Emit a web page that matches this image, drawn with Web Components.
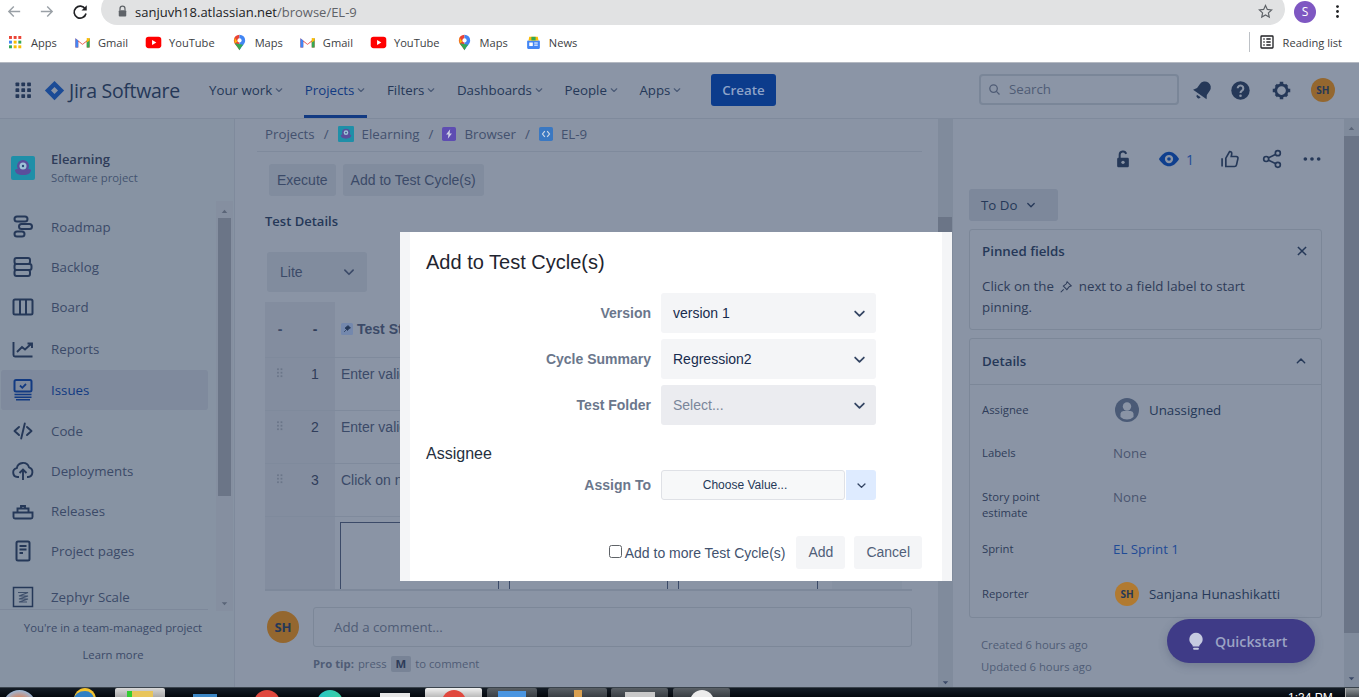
<!DOCTYPE html>
<html>
<head>
<meta charset="utf-8">
<title>EL-9</title>
<style>
  html, body { margin: 0; height: 697px; overflow: hidden; background: #8a94a5; }
  body { position: relative; display: flex; flex-direction: column; font-family: "Open Sans", sans-serif; }
  .workspace { display: flex; height: 569px; overflow: hidden; }
</style>
</head>
<body>
  <chrome-bar></chrome-bar>
  <jira-nav></jira-nav>
  <div class="workspace">
    <side-nav></side-nav>
    <issue-main></issue-main>
    <issue-panel></issue-panel>
  </div>
  <task-bar></task-bar>
  <test-dialog></test-dialog>
  <quick-start></quick-start>

<script>
const ICONS = {
  back: `<path d="M20 12H5M11 5l-7 7 7 7" fill="none" stroke="currentColor" stroke-width="2"/>`,
  forward: `<path d="M4 12h15M13 5l7 7-7 7" fill="none" stroke="currentColor" stroke-width="2"/>`,
  reload: `<path d="M19 8a8 8 0 1 0 1 6" fill="none" stroke="currentColor" stroke-width="2.2"/><path d="M21 3v7h-7z" fill="currentColor"/>`,
  lock: `<path d="M8 10V7.500a4 4 0 0 1 8 0V10" fill="none" stroke="currentColor" stroke-width="2"/><rect x="6" y="10" width="12" height="10" rx="1.500" fill="currentColor"/>`,
  star: `<path d="M12 3.500l2.600 5.600 6 .7-4.500 4.100 1.200 6-5.300-3-5.300 3 1.200-6-4.500-4.100 6-.7z" fill="none" stroke="currentColor" stroke-width="1.700"/>`,
  kebab: `<circle cx="12" cy="5" r="2" fill="currentColor"/><circle cx="12" cy="12" r="2" fill="currentColor"/><circle cx="12" cy="19" r="2" fill="currentColor"/>`,
  apps: [0, 1, 2].map(r => [0, 1, 2].map(c => `<rect x="${3 + c * 7}" y="${3 + r * 7}" width="4.400" height="4.400" fill="${[['#ea4335', '#ea4335', '#ea4335'], ['#4285f4', '#fbbc04', '#34a853'], ['#34a853', '#fbbc04', '#fbbc04']][r][c]}"/>`).join('')).join(''),
  gmail: `<path d="M2 6l10 8 10-8v13h-4V10.500l-6 4.500-6-4.500V19H2z" fill="#ea4335"/><path d="M2 6v13h4V9z" fill="#4285f4"/><path d="M22 6v13h-4V9z" fill="#34a853"/><path d="M18 5.500L22 6v3l-4 3z" fill="#fbbc04"/>`,
  youtube: `<rect x="1" y="4" width="22" height="16" rx="4" fill="#f00"/><path d="M10 8.500v7l6-3.500z" fill="#fff"/>`,
  maps: `<path d="M12 1a8 8 0 0 0-8 8c0 5 5 8 8 14z" fill="#ea4335"/><path d="M12 1a8 8 0 0 1 8 8c0 5-5 8-8 14z" fill="#4285f4"/><path d="M5 13c2 3 5 6 7 10 1-3 3-5 5-8z" fill="#34a853"/><path d="M5 5l4 6-4 2z" fill="#fbbc04"/><circle cx="12" cy="9" r="3" fill="#fff"/>`,
  news: `<rect x="3" y="9" width="18" height="12" rx="1.500" fill="#4285f4"/><path d="M5 9l1-5h12l1 5z" fill="#fbbc04"/><path d="M9 4h6v5H9z" fill="#34a853"/><rect x="6" y="12" width="5" height="5" fill="#fff"/><rect x="13" y="12" width="5" height="1.500" fill="#fff"/><rect x="13" y="15" width="5" height="1.500" fill="#fff"/>`,
  readinglist: `<rect x="3" y="3" width="18" height="18" rx="1" fill="none" stroke="currentColor" stroke-width="2"/><path d="M6.500 7.500h2M6.500 12h2M6.500 16.500h2M11 7.500h6.500M11 12h6.500M11 16.500h6.500" stroke="currentColor" stroke-width="2"/>`,
  grid: [0, 1, 2].map(r => [0, 1, 2].map(c => `<rect x="${3 + c * 7}" y="${3 + r * 7}" width="4.500" height="4.500" rx=".8" fill="currentColor"/>`).join('')).join(''),
  jira: `<path d="M12 1L23 12 12 23 1 12z" fill="currentColor"/><path d="M12 8l4 4-4 4-4-4z" fill="#8a94a5"/>`,
  chevron: `<path d="M6.500 9.500l5.500 5.500 5.500-5.500" fill="none" stroke="currentColor" stroke-width="2.200" stroke-linecap="round" stroke-linejoin="round"/>`,
  chevronup: `<path d="M6.500 14.500l5.500-5.500 5.500 5.500" fill="none" stroke="currentColor" stroke-width="2.200" stroke-linecap="round" stroke-linejoin="round"/>`,
  search: `<circle cx="10.500" cy="10.500" r="6" fill="none" stroke="currentColor" stroke-width="2"/><path d="M15 15l5 5" stroke="currentColor" stroke-width="2"/>`,
  bell: `<g transform="rotate(35 12 12)"><path d="M12 2a6.500 6.500 0 0 0-6.500 6.500V14L3 18h18l-2.500-4V8.500A6.500 6.500 0 0 0 12 2z" fill="currentColor"/><path d="M9.500 20a2.500 2.500 0 0 0 5 0z" fill="currentColor"/></g>`,
  help: `<circle cx="12" cy="12" r="10.500" fill="currentColor"/><path d="M8.800 9.500a3.200 3.200 0 1 1 4.900 2.700c-1.100.7-1.700 1.200-1.700 2.600" fill="none" stroke="#8a94a5" stroke-width="2.400"/><circle cx="12" cy="18" r="1.500" fill="#8a94a5"/>`,
  gear: `<circle cx="12" cy="12" r="6.500" fill="none" stroke="currentColor" stroke-width="3"/><path d="M10 2h4v3.500h-4zM10 18.500h4V22h-4zM2 10h3.500v4H2zM18.500 10H22v4h-3.500zM4.300 6.800l2.500-2.500 2.400 2.400-2.500 2.500zM14.800 17.300l2.500-2.500 2.400 2.400-2.500 2.500zM4.300 17.200l2.400-2.400 2.500 2.500-2.400 2.400zM14.800 6.700l2.400-2.400 2.500 2.500-2.400 2.400z" fill="currentColor"/>`,
  roadmap: `<g fill="none" stroke="currentColor" stroke-width="2"><rect x="3.500" y="1.500" width="13" height="5" rx="2.500"/><rect x="8" y="9" width="13" height="5" rx="2.500"/><rect x="3.500" y="16.500" width="10" height="5" rx="2.500"/></g>`,
  backlog: `<g fill="none" stroke="currentColor" stroke-width="2"><rect x="3.500" y="3" width="15.500" height="6" rx="2"/><rect x="3.500" y="9" width="17" height="6" rx="2"/><rect x="3.500" y="15" width="15.500" height="6" rx="2"/></g>`,
  board: `<g fill="none" stroke="currentColor" stroke-width="2"><rect x="2.500" y="4.500" width="19" height="15" rx="1.500"/><path d="M9 4.500v15M15 4.500v15"/></g>`,
  reports: `<path d="M2.500 5v13a1.500 1.500 0 0 0 1.500 1.500h17.500M6 15l5-5 3 2.500 6-5.500M16.500 6.500H21V11" fill="none" stroke="currentColor" stroke-width="1.900"/>`,
  issues: `<rect x="3.500" y="2" width="17" height="11.500" rx="1.500" fill="none" stroke="currentColor" stroke-width="2"/><path d="M9 7.500l2.300 2.300 3.700-3.800" fill="none" stroke="currentColor" stroke-width="1.800"/><path d="M3.500 16.500h17M3.500 19.200h17M5 21.700h14" stroke="currentColor" stroke-width="1.400"/>`,
  code: `<path d="M8 8l-4.500 4 4.500 4M16 8l4.500 4-4.500 4M13.800 4.500l-3.600 15" fill="none" stroke="currentColor" stroke-width="1.900" stroke-linecap="round" stroke-linejoin="round"/>`,
  deploy: `<path d="M8 18H6.500a4.500 4.500 0 0 1-.7-8.900 6.300 6.300 0 0 1 12.200-.8A5 5 0 0 1 17 18h-1M12 21V11M8.500 14l3.500-3.500 3.500 3.500" fill="none" stroke="currentColor" stroke-width="1.900"/>`,
  releases: `<path d="M2.500 13.500h19v4.500a1.500 1.500 0 0 1-1.500 1.500H4A1.500 1.500 0 0 1 2.500 18zM6.500 13.500V9.500h11v4M10 9.500V7h4v2.500" fill="none" stroke="currentColor" stroke-width="1.900"/>`,
  pages: `<rect x="5.500" y="2.500" width="13" height="19" rx="1.500" fill="none" stroke="currentColor" stroke-width="2"/><path d="M8.500 7h7M8.500 10.500h7M8.500 14h3.500" stroke="currentColor" stroke-width="1.800"/>`,
  zephyr: `<rect x="2.500" y="2.500" width="19" height="19" fill="none" stroke="currentColor" stroke-width="1.500"/><path d="M7 7.500h10L8 11h9l-9 3h9l-9 3h8" fill="none" stroke="currentColor" stroke-width="1.100" opacity=".75"/>`,
  project: `<rect width="24" height="24" rx="2" fill="#1f8fa8"/><path d="M4 14c1-2 15-2 16 0 0 3-3 5-8 5s-8-2-8-5z" fill="#5a4f9c"/><circle cx="12" cy="10" r="6" fill="#5a4f9c"/><circle cx="12" cy="10" r="3.500" fill="#9fc3d8"/><circle cx="12" cy="10" r="1.200" fill="#2a4a7a"/>`,
  bolt: `<rect width="24" height="24" rx="3" fill="#5e4db2"/><path d="M14 4l-7 9h4l-1 7 7-9h-4z" fill="#cfd2e6"/>`,
  subtask: `<rect width="24" height="24" rx="3" fill="#3a78c2"/><path d="M10 7l-4 5 4 5M14 7l4 5-4 5" fill="none" stroke="#cfd8e6" stroke-width="2"/>`,
  pin: `<rect width="24" height="24" rx="3" fill="#7488ad"/><path d="M14 5l5 5-3 1-3 4-5-5 4-3zM10 14l-4 4" fill="#253858" stroke="#253858" stroke-width="1.500"/>`,
  pinline: `<path d="M14 3l7 7-3.500 1.500-4 5-6-6 5-4zM8 16l-5 5" fill="none" stroke="currentColor" stroke-width="1.800"/>`,
  drag: [0, 1, 2].map(r => [0, 1].map(c => `<rect x="${7 + c * 6}" y="${4 + r * 6}" width="3" height="3" fill="currentColor"/>`).join('')).join(''),
  unlock: `<path d="M8 11V7a4 4 0 0 1 7.800-1.200" fill="none" stroke="currentColor" stroke-width="2.400"/><path d="M6.500 10.500h11A1.500 1.500 0 0 1 19 12v8.500a1.500 1.500 0 0 1-1.500 1.500h-11A1.500 1.500 0 0 1 5 20.500V12a1.500 1.500 0 0 1 1.500-1.500z" fill="currentColor"/><circle cx="12" cy="16" r="2" fill="#8a94a5"/>`,
  eye: `<path d="M1 12c3-5 7-8 11-8s8 3 11 8c-3 5-7 8-11 8s-8-3-11-8z" fill="currentColor"/><circle cx="12" cy="12" r="4.500" fill="#8a94a5"/><circle cx="12" cy="12" r="2" fill="currentColor"/>`,
  thumb: `<path d="M7 21V11l4.500-8c2 0 3 1.500 2.500 3.500L13.500 9h6a2 2 0 0 1 2 2.500l-1.700 7.500a2.500 2.500 0 0 1-2.500 2zM2.500 11v10" fill="none" stroke="currentColor" stroke-width="2"/>`,
  share: `<g fill="none" stroke="currentColor" stroke-width="2"><circle cx="5" cy="12" r="3"/><circle cx="19" cy="5" r="3"/><circle cx="19" cy="19" r="3"/><path d="M8 10.500l8-4M8 13.500l8 4"/></g>`,
  dots: `<circle cx="4" cy="12" r="2.200" fill="currentColor"/><circle cx="12" cy="12" r="2.200" fill="currentColor"/><circle cx="20" cy="12" r="2.200" fill="currentColor"/>`,
  close: `<path d="M5 5l14 14M19 5L5 19" stroke="currentColor" stroke-width="2.600"/>`,
  user: `<circle cx="12" cy="12" r="12" fill="currentColor"/><circle cx="12" cy="8.500" r="4.200" fill="#8a94a5"/><path d="M5.500 15.500a3 3 0 0 1 3-2.500h7a3 3 0 0 1 3 2.500V19a9.500 9.500 0 0 1-13 0z" fill="#8a94a5"/>`,
  bulb: `<path d="M12 2a8 8 0 0 0-5 14.200c.8.700 1 1.300 1 2.300h8c0-1 .2-1.600 1-2.300A8 8 0 0 0 12 2z" fill="currentColor"/><rect x="8.500" y="20" width="7" height="2.500" rx="1.200" fill="currentColor"/>`,
  arrowup: `<path d="M12 8l6 7H6z" fill="currentColor"/>`,
  arrowdown: `<path d="M12 16l6-7H6z" fill="currentColor"/>`
};

class AppIcon extends HTMLElement {
  connectedCallback() {
    const size = this.getAttribute('size') || 24;
    const name = this.getAttribute('name');
    this.attachShadow({ mode: 'open' }).innerHTML = `
      <style>:host { display: inline-flex; flex: none; } svg { display: block; }</style>
      <svg width="${size}" height="${size}" viewBox="0 0 24 24">${ICONS[name] || ''}</svg>`;
  }
}
customElements.define('app-icon', AppIcon);

class ChromeBar extends HTMLElement {
  connectedCallback() {
    // icon x / text x come from the reference, so each mark carries its own gap
    const marks = [['gmail', 'Gmail', 17], ['youtube', 'YouTube', 16], ['maps', 'Maps', 16], ['gmail', 'Gmail', 17], ['youtube', 'YouTube', 16], ['maps', 'Maps', 17], ['news', 'News', 0]];
    this.attachShadow({ mode: 'open' }).innerHTML = `
      <style>
        :host { display: block; height: 62px; background: #fff; font-family: "Open Sans", sans-serif; color: #3c4043; box-sizing: border-box; overflow: hidden; }
        .top { height: 25px; display: flex; align-items: center; padding-left: 6px; }
        .nav { color: #9aa0a6; display: flex; width: 95px; gap: 15px; align-items: center; margin-top: -2px; }
        .nav .r { color: #202124; margin-left: 1px; }
        .url { width: 1184px; height: 32px; margin-top: -7px; background: #e1e2e3; display: flex; align-items: center; padding: 5px 11px 0 14px; box-sizing: border-box; border-radius: 16px; font-size: 13px; color: #202124; }
        .url .lk { color: #5f6368; margin-right: 5px; }
        .url .path { color: #5f6368; }
        .url .star { margin-left: auto; color: #5f6368; }
        .me { width: 22px; height: 22px; border-radius: 50%; background: #7e57c2; color: #fff; font-size: 12px; display: flex; align-items: center; justify-content: center; margin-left: 9px; margin-top: -2px; }
        .kb { margin-left: 13px; color: #202124; margin-top: -2px; }
        .marks { height: 36px; display: flex; align-items: center; padding: 0 0 2px 7px; box-sizing: border-box; font-size: 11.100px; }
        .m { display: flex; align-items: center; gap: 7px; }
        .m.a { gap: 8px; margin-right: 17px; }
        .rl { margin-left: auto; display: flex; align-items: center; gap: 8px; border-left: 1px solid #bdc1c6; height: 20px; padding: 0 17px 0 9px; color: #3c4043; }
        .rl app-icon { color: #202124; }
      </style>
      <div class="top">
        <div class="nav"><app-icon name="back" size="17"></app-icon><app-icon name="forward" size="17"></app-icon><app-icon class="r" name="reload" size="18"></app-icon></div>
        <div class="url"><app-icon class="lk" name="lock" size="15"></app-icon><span>sanjuvh18.atlassian.net<span class="path">/browse/EL-9</span></span><app-icon class="star" name="star" size="17"></app-icon></div>
        <div class="me">S</div>
        <app-icon class="kb" name="kebab" size="17"></app-icon>
      </div>
      <div class="marks">
        <div class="m a"><app-icon name="apps" size="16"></app-icon>Apps</div>
        ${marks.map(([i, t, g]) => `<div class="m" style="margin-right:${g}px"><app-icon name="${i}" size="17"></app-icon>${t}</div>`).join('')}
        <div class="rl"><app-icon name="readinglist" size="16"></app-icon>Reading list</div>
      </div>`;
  }
}
customElements.define('chrome-bar', ChromeBar);

class JiraNav extends HTMLElement {
  connectedCallback() {
    const items = ['Your work', 'Projects', 'Filters', 'Dashboards', 'People', 'Apps'];
    this.attachShadow({ mode: 'open' }).innerHTML = `
      <style>
        :host { display: flex; align-items: center; background: #8b95a6; border-top: 1px solid #b4b9c2; border-bottom: 1px solid #7f8a9c; height: 55px; padding-left: 13px; color: #253858; font-family: "Open Sans", sans-serif; font-size: 13.300px; font-weight: 500; }
        .logo { display: flex; align-items: center; gap: 4px; margin-left: 11px; width: 165px; color: #1b4b96; }
        .logo b { color: #253858; font-weight: 500; font-size: 19.500px; letter-spacing: -.3px; }
        .it { height: 100%; display: flex; align-items: center; gap: 1px; margin-right: 19.500px; position: relative; }
        .it app-icon { color: #4a5a76; }
        .it.on { color: #123a82; }
        .it.on::after { content: ""; position: absolute; left: -1px; right: 0; bottom: 0; height: 3px; background: #123a82; }
        .create { width: 65px; height: 32px; background: #0c3c8c; border-radius: 3px; color: #8ea3c8; display: flex; align-items: center; justify-content: center; margin-left: 8px; font-weight: 600; }
        .search { margin-left: 203px; width: 200px; height: 31px; box-sizing: border-box; border: 2px solid #7a8698; border-radius: 4px; display: flex; align-items: center; padding-left: 6px; gap: 7px; color: #4f5c75; font-weight: 400; margin-top: -2px; }
        .ic { display: flex; align-items: center; color: #253858; margin-left: 13px; }
        .sh { width: 24px; height: 24px; border-radius: 50%; background: #94672f; color: #253858; font-size: 10px; font-weight: 700; display: flex; align-items: center; justify-content: center; margin-left: 19px; }
      </style>
      <app-icon name="grid" size="20"></app-icon>
      <div class="logo"><app-icon name="jira" size="21"></app-icon><b>Jira Software</b></div>
      ${items.map((t, i) => `<div class="it ${i === 1 ? 'on' : ''}">${t}<app-icon name="chevron" size="12"></app-icon></div>`).join('')}
      <div class="create">Create</div>
      <div class="search"><app-icon name="search" size="15"></app-icon>Search</div>
      <div class="ic"><app-icon name="bell" size="22"></app-icon></div>
      <div class="ic" style="margin-left:16px"><app-icon name="help" size="21"></app-icon></div>
      <div class="ic" style="margin-left:20px"><app-icon name="gear" size="21"></app-icon></div>
      <div class="sh">SH</div>`;
  }
}
customElements.define('jira-nav', JiraNav);

class SideItem extends HTMLElement {
  connectedCallback() {
    const on = this.hasAttribute('active');
    this.attachShadow({ mode: 'open' }).innerHTML = `
      <style>
        :host { display: flex; align-items: center; height: 40px; width: 207px; margin-left: 1px; border-radius: 3px; padding-left: 10px; gap: 16px; box-sizing: border-box; flex: none; color: ${on ? '#123a82' : '#3b4a68'}; background: ${on ? '#7f8a9d' : 'none'}; }
        app-icon { color: ${on ? '#123a82' : '#253858'}; }
      </style>
      <app-icon name="${this.getAttribute('icon')}" size="24"></app-icon><slot></slot>`;
  }
}
customElements.define('side-item', SideItem);

class SideNav extends HTMLElement {
  connectedCallback() {
    this.attachShadow({ mode: 'open' }).innerHTML = `
      <style>
        :host { display: flex; flex-direction: column; width: 235px; flex: none; background: #8793a3; border-right: 1px solid #7f8a9c; box-sizing: border-box; font-size: 13.300px; position: relative; color: #3b4a68; }
        .proj { display: flex; gap: 16px; padding: 37px 0 0 11px; height: 52px; }
        .proj > div { margin-top: -6px; }
        .proj b { display: block; font-weight: 600; color: #2e3c59; line-height: 19px; font-size: 13px; }
        .proj small { font-size: 11.300px; color: #445370; line-height: 18px; display: block; }
        .list { height: 401px; display: flex; flex-direction: column; overflow: hidden; border-bottom: 1px solid #7d889a; width: 208px; }
        .bar { position: absolute; left: 216px; top: 82px; width: 17px; height: 410px; background: #858fa0; }
        .bar i { position: absolute; left: 2px; right: 2px; top: 17px; height: 278px; background: #6b7587; }
        .bar app-icon { position: absolute; left: 3px; color: #5a6578; }
        .foot { text-align: center; width: 226px; font-size: 11.300px; line-height: 15px; }
        .foot div:first-child { margin-top: 10px; }
        .foot div:last-child { margin-top: 12px; }
      </style>
      <div class="proj"><app-icon name="project" size="24"></app-icon><div><b>Elearning</b><small>Software project</small></div></div>
      <div class="list">
        <side-item icon="roadmap" style="margin-top:-1px">Roadmap</side-item>
        <side-item icon="backlog">Backlog</side-item>
        <side-item icon="board">Board</side-item>
        <side-item icon="reports" style="margin-top:2px">Reports</side-item>
        <side-item icon="issues" active style="margin-top:1px">Issues</side-item>
        <side-item icon="code" style="margin-top:1px">Code</side-item>
        <side-item icon="deploy">Deployments</side-item>
        <side-item icon="releases">Releases</side-item>
        <side-item icon="pages">Project pages</side-item>
        <side-item icon="zephyr" style="margin-top:6px">Zephyr Scale</side-item>
      </div>
      <div class="foot"><div>You're in a team-managed project</div><div>Learn more</div></div>
      <div class="bar"><i></i><app-icon name="arrowup" size="11" style="top:5px"></app-icon><app-icon name="arrowdown" size="11" style="bottom:2px"></app-icon></div>`;
  }
}
customElements.define('side-nav', SideNav);

class IssueMain extends HTMLElement {
  connectedCallback() {
    const row = (n, t) => `<div class="row"><div class="c1"><app-icon name="drag" size="14"></app-icon></div><div class="c2">${n}</div><div class="c3">${t}</div></div>`;
    this.attachShadow({ mode: 'open' }).innerHTML = `
      <style>
        :host { display: block; width: 718px; flex: none; position: relative; box-sizing: border-box; color: #2e3c59; overflow: hidden; }
        .body { padding-left: 30px; width: 647px; }
        .crumbs { padding: 0 0 1px 8px; margin-left: -8px; border-bottom: 1px solid #7f8a9c; display: flex; align-items: center; gap: 8px; font-size: 13.300px; color: #43516e; width: 665px; box-sizing: border-box; height: 33px; }
        .crumbs span { margin: 0 1px; }
        .btns { display: flex; gap: 7px; margin: 12px 0 0 4px; font: 14px "Liberation Sans", sans-serif; color: #3b4a68; }
        .btns div { height: 32px; line-height: 32px; padding: 0 8px; background: #818c9e; border-radius: 3px; }
        h4 { margin: 16px 0 0; font-size: 13px; font-weight: 600; line-height: 18px; color: #253858; }
        .lite { margin: 22px 0 0 2px; width: 100px; height: 40px; background: #818c9e; border-radius: 3px; display: flex; align-items: center; justify-content: space-between; padding: 0 9px 0 13px; box-sizing: border-box; font: 14px "Liberation Sans", sans-serif; color: #3b4a68; }
        .table { margin-top: 10px; font: 14px "Liberation Sans", sans-serif; border-bottom: 2px solid #7d889a; height: 287px; overflow: hidden; }
        .row, .hd { display: flex; border-bottom: 1px solid #7f8a9c; height: 52px; }
        .hd { height: 55px; font-weight: 700; align-items: stretch; }
        .c1, .c2 { width: 35px; background: #838d9f; display: flex; justify-content: center; padding: 8px 5px 0 0; box-sizing: border-box; flex: none; color: #303d5a; }
        .c1 { color: #6b7689; }
        .c3 { padding: 8px 0 0 6px; color: #3b4a68; }
        .hd > div { display: flex; align-items: center; padding-top: 0; }
        .hd .c1 { color: #3b4a68; }
        .hd .c3 { gap: 4px; }
        .inner { position: relative; height: 72px; }
        .inner .shade { position: absolute; top: 0; bottom: 0; left: 0; width: 70px; background: #838d9f; }
        .cell { position: absolute; top: 5px; height: 90px; border: 1px solid #3b4a68; box-sizing: border-box; }
        .right { position: absolute; left: 567px; top: 0; bottom: 0; width: 70px; background: #8691a2; }
        .comment { margin-top: 16px; display: flex; gap: 14px; align-items: center; margin-left: 2px; }
        .av { width: 32px; height: 32px; border-radius: 50%; background: #94672f; color: #253858; font-size: 13px; font-weight: 700; display: flex; align-items: center; justify-content: center; }
        .in { width: 599px; height: 40px; box-sizing: border-box; border: 1px solid #7c8798; border-radius: 3px; display: flex; align-items: center; padding: 1px 0 0 20px; font-size: 13.300px; color: #4f5c75; flex: none; }
        .tip { margin: 8px 0 0 48px; font-size: 11.300px; color: #4f5c75; display: flex; align-items: center; gap: 4px; height: 18px; }
        .tip b { font-weight: 700; }
        .tip kbd { font: 700 11.300px "Open Sans", sans-serif; background: #788396; border-radius: 2px; padding: 0 5px; color: #2e3c59; line-height: 16px; }
        .sb { position: absolute; left: 703px; top: 0; bottom: 0; width: 15px; background: #808b9c; }
        .sb i { position: absolute; left: 0; right: 1px; top: 98px; height: 200px; background: #6b7587; }
        .sb app-icon { position: absolute; left: 2px; bottom: -1px; color: #3b4a68; }
      </style>
      <div class="body">
        <div class="crumbs">Projects <span>/</span> <app-icon name="project" size="16"></app-icon> Elearning <span>/</span> <app-icon name="bolt" size="14"></app-icon> Browser <span>/</span> <app-icon name="subtask" size="14"></app-icon> EL-9</div>
        <div class="btns"><div>Execute</div><div>Add to Test Cycle(s)</div></div>
        <h4>Test Details</h4>
        <div class="lite">Lite<app-icon name="chevron" size="18"></app-icon></div>
        <div class="table">
          <div class="hd"><div class="c1">-</div><div class="c2">-</div><div class="c3"><app-icon name="pin" size="12"></app-icon>Test Step</div></div>
          ${row(1, 'Enter valid')}${row(2, 'Enter valid')}${row(3, 'Click on next')}
          <div class="inner"><div class="shade"></div>
            <div class="cell" style="left:75px;width:159px"></div>
            <div class="cell" style="left:244px;width:159px"></div>
            <div class="cell" style="left:413px;width:140px"></div>
            <div class="right"></div>
          </div>
        </div>
        <div class="comment"><div class="av">SH</div><div class="in">Add a comment...</div></div>
        <div class="tip"><b>Pro tip:</b> press <kbd>M</kbd> to comment</div>
      </div>
      <div class="sb"><i></i><app-icon name="arrowdown" size="11"></app-icon></div>`;
  }
}
customElements.define('issue-main', IssueMain);

class IssuePanel extends HTMLElement {
  connectedCallback() {
    const field = (h, label, value) => `<div class="f" style="height:${h}px"><div class="l">${label}</div><div class="v">${value}</div></div>`;
    this.attachShadow({ mode: 'open' }).innerHTML = `
      <style>
        :host { display: block; flex: 1; position: relative; padding: 0 37px 0 16px; font-size: 13.300px; color: #253858; box-sizing: border-box; }
        .acts { height: 71px; margin-bottom: -1px; display: flex; align-items: center; color: #253858; padding-top: 10px; box-sizing: border-box; }
        .acts .n { color: #1f4b96; margin-left: 6px; font-size: 14px; }
        .todo { width: 89px; height: 32px; background: #7d889b; border-radius: 3px; display: flex; align-items: center; padding-left: 12px; gap: 7px; box-sizing: border-box; }
        .card { border: 1px solid #7c8798; border-radius: 3px; margin-top: 8px; width: 353px; box-sizing: border-box; }
        .head { display: flex; justify-content: space-between; align-items: center; padding: 12px; line-height: 19px; font-weight: 600; }
        .txt { padding: 3px 12px 10px; line-height: 21px; color: #2e3c59; height: 43px; }
        .txt app-icon { vertical-align: -3px; margin: 0 2px; }
        .details .head { height: 46px; box-sizing: border-box; border-bottom: 1px solid #7c8798; }
        .f { display: flex; padding: 0 12px; align-items: flex-start; }
        .l { width: 131px; font-size: 11.300px; font-weight: 500; color: #2e3c59; line-height: 16px; flex: none; padding-top: 1px; }
        .v { line-height: 18px; display: flex; align-items: center; gap: 10px; }
        .gr { color: #4a5670; }
        .av { width: 24px; height: 24px; border-radius: 50%; background: #b17a30; color: #253858; font-size: 10px; font-weight: 700; display: flex; align-items: center; justify-content: center; margin: -3px 0 -3px 2px; }
        .user { color: #4a5a76; margin: -3px 0 -3px 2px; }
        .times { padding: 16px 0 0 12px; font-size: 11.300px; color: #4f5c75; line-height: 22px; }
        .sb { position: absolute; right: 0; top: 0; bottom: 0; width: 15px; background: #808b9c; }
        .sb i { position: absolute; left: 0; right: 0; top: 17px; height: 497px; background: #6b7587; }
        .sb app-icon { position: absolute; left: 2px; color: #5a6578; }
      </style>
      <div class="acts">
        <app-icon name="unlock" size="20" style="margin-left:144px"></app-icon>
        <app-icon name="eye" size="22" style="margin-left:25px;color:#0f3f8e"></app-icon><span class="n">1</span>
        <app-icon name="thumb" size="20" style="margin-left:26px"></app-icon>
        <app-icon name="share" size="20" style="margin-left:22px"></app-icon>
        <app-icon name="dots" size="20" style="margin-left:20px"></app-icon>
      </div>
      <div class="todo">To Do<app-icon name="chevron" size="14"></app-icon></div>
      <div class="card">
        <div class="head">Pinned fields<app-icon name="close" size="14"></app-icon></div>
        <div class="txt">Click on the <app-icon name="pinline" size="14"></app-icon> next to a field label to start<br>pinning.</div>
      </div>
      <div class="card details">
        <div class="head">Details<app-icon name="chevronup" size="16"></app-icon></div>
        <div style="height:16px"></div>
        ${field(43, 'Assignee', '<app-icon class="user" name="user" size="24"></app-icon>Unassigned')}
        ${field(44, 'Labels', '<span class="gr">None</span>')}
        ${field(52, 'Story point<br>estimate', '<span class="gr">None</span>')}
        ${field(45, 'Sprint', '<span style="color:#1f4b96">EL Sprint 1</span>')}
        ${field(32, 'Reporter', '<div class="av">SH</div>Sanjana Hunashikatti')}
      </div>
      <div class="times">Created 6 hours ago<br>Updated 6 hours ago</div>
      <div class="sb"><i></i><app-icon name="arrowup" size="11" style="top:4px"></app-icon><app-icon name="arrowdown" size="11" style="bottom:3px;color:#3b4a68"></app-icon></div>`;
  }
}
customElements.define('issue-panel', IssuePanel);

class FormSelect extends HTMLElement {
  connectedCallback() {
    const dis = this.hasAttribute('disabled');
    this.attachShadow({ mode: 'open' }).innerHTML = `
      <style>
        :host { display: flex; align-items: center; justify-content: space-between; height: 40px; width: 215px; padding: 0 7px 0 12px; box-sizing: border-box; border-radius: 3px; background: ${dis ? '#ebecf0' : '#f4f5f7'}; color: ${dis ? '#7a869a' : '#172b4d'}; }
        app-icon { color: #344563; }
      </style>
      <slot></slot><app-icon name="chevron" size="19"></app-icon>`;
  }
}
customElements.define('form-select', FormSelect);

class TestDialog extends HTMLElement {
  connectedCallback() {
    this.attachShadow({ mode: 'open' }).innerHTML = `
      <style>
        :host { display: block; position: absolute; left: 400px; top: 232px; width: 552px; height: 349px; box-sizing: border-box; background: #fff; border-left: 10px solid #f4f5f7; border-right: 10px solid #f4f5f7; font: 14px "Liberation Sans", Arial, sans-serif; color: #172b4d; padding: 0 20px 0 16px; }
        h2 { font-size: 20px; font-weight: 400; margin: 0; line-height: 24px; padding-top: 18px; color: #1f2530; }
        .form { display: grid; grid-template-columns: 225px 215px; column-gap: 10px; row-gap: 6px; margin-top: 19px; align-items: center; }
        label { font-weight: 700; color: #6b778c; text-align: right; }
        h3 { font-size: 16px; font-weight: 400; margin: 20px 0 0; line-height: 18px; color: #253040; }
        .assign { display: grid; grid-template-columns: 225px 215px; column-gap: 10px; margin-top: 7px; align-items: center; }
        .pick { display: flex; height: 30px; gap: 1px; }
        .val { width: 184px; box-sizing: border-box; border: 1px solid #dfe1e6; border-radius: 3px; background: #f7f8f9; font-size: 12px; display: flex; align-items: center; justify-content: center; color: #253858; padding-right: 16px; }
        .arr { width: 30px; background: #deebff; border-radius: 0 3px 3px 0; display: flex; align-items: center; justify-content: center; color: #344563; }
        .foot { display: flex; align-items: center; justify-content: flex-end; margin-top: 36px; color: #42526e; }
        .box { width: 13px; height: 13px; border: 1px solid #5f6368; border-radius: 2.500px; box-sizing: border-box; margin: -2px 3px 0 0; }
        .lb { margin-right: 2px; }
        .btn { height: 33px; line-height: 33px; padding: 0 12px; background: #f4f5f7; border-radius: 3px; color: #505f79; margin-left: 9px; }
      </style>
      <h2>Add to Test Cycle(s)</h2>
      <div class="form">
        <label>Version</label><form-select>version 1</form-select>
        <label>Cycle Summary</label><form-select>Regression2</form-select>
        <label>Test Folder</label><form-select disabled>Select...</form-select>
      </div>
      <h3>Assignee</h3>
      <div class="assign">
        <label>Assign To</label>
        <div class="pick"><div class="val">Choose Value...</div><div class="arr"><app-icon name="chevron" size="15"></app-icon></div></div>
      </div>
      <div class="foot"><span class="box"></span><span class="lb">Add to more Test Cycle(s)</span><span class="btn">Add</span><span class="btn">Cancel</span></div>`;
  }
}
customElements.define('test-dialog', TestDialog);

class QuickStart extends HTMLElement {
  connectedCallback() {
    this.attachShadow({ mode: 'open' }).innerHTML = `
      <style>
        :host { position: absolute; left: 1167px; top: 619px; width: 148px; height: 44px; border-radius: 22px; background: #3f3b87; color: #9ba3c4; display: flex; align-items: center; padding-left: 19px; gap: 9px; box-sizing: border-box; font: 600 14.300px "Open Sans", sans-serif; box-shadow: 0 3px 8px rgba(60,70,100,.3); }
      </style>
      <app-icon name="bulb" size="20" style="color:#c6cbe0"></app-icon>Quickstart`;
  }
}
customElements.define('quick-start', QuickStart);

class TaskBar extends HTMLElement {
  connectedCallback() {
    const btn = (x, w, bg, inner) => `<div class="b" style="left:${x}px;width:${w}px;background:${bg}">${inner}</div>`;
    const dot = (c, w = 20) => `<i style="width:${w}px;height:${w}px;border-radius:50%;background:${c}"></i>`;
    const dark = 'linear-gradient(#5a6066,#2e3338)';
    this.attachShadow({ mode: 'open' }).innerHTML = `
      <style>
        :host { display: block; height: 10px; position: relative; background: linear-gradient(#141c26, #04080d); border-top: 1px solid #3a434c; box-sizing: border-box; overflow: hidden; color: #fff; font: 12px "Liberation Sans", sans-serif; }
        .b { position: absolute; top: 0; height: 12px; display: flex; justify-content: center; border-radius: 2px 2px 0 0; }
        .b i { display: block; margin-top: 2px; }
        .t { position: absolute; left: 1288px; top: 3px; line-height: 14px; white-space: nowrap; }
        .end { position: absolute; right: 0; top: 0; width: 14px; height: 10px; background: linear-gradient(#8f9599, #3e4347); border-left: 1px solid #aaa; box-sizing: border-box; }
      </style>
      ${btn(3, 33, 'none', dot('radial-gradient(#e07a4a 30%, #9db6d4 70%)', 33))}
      ${btn(72, 26, 'none', `<i style="width:20px;height:20px;border-radius:50%;background:#2f7fc4;border-top:3px solid #f2c230;border-right:2px solid #f2c230;margin-top:0"></i>`)}
      ${btn(115, 50, 'linear-gradient(#d8d8d8,#9a9a9a)', `<i style="width:26px;height:12px;margin-top:3px;background:linear-gradient(90deg,#3c3 20%,#e8c55c 20%)"></i>`)}
      ${btn(190, 30, 'none', `<i style="width:24px;height:10px;margin-top:6px;background:#3b86c4"></i>`)}
      ${btn(252, 30, 'none', dot('#e0483e', 26))}
      ${btn(315, 30, 'none', dot('linear-gradient(90deg,#27c5c9,#3ad0a0)', 26))}
      ${btn(378, 34, 'none', `<i style="width:30px;height:6px;margin-top:5px;background:#e6e6e6"></i>`)}
      ${btn(425, 57, 'linear-gradient(#f0f0f0,#a8a8a8)', dot('#e0483e', 24))}
      ${btn(487, 50, dark, `<i style="width:28px;height:10px;margin-top:3px;background:#4a95e0"></i>`)}
      ${btn(548, 59, dark, `<i style="width:8px;height:10px;background:#d9a050"></i>`)}
      ${btn(611, 57, dark, `<i style="width:30px;height:6px;margin-top:4px;background:#c8c8c8"></i>`)}
      ${btn(673, 57, dark, dot('#ececec', 24))}
      <div class="t">1:34 PM</div>
      <div class="end"></div>`;
  }
}
customElements.define('task-bar', TaskBar);
</script>
</body>
</html>
